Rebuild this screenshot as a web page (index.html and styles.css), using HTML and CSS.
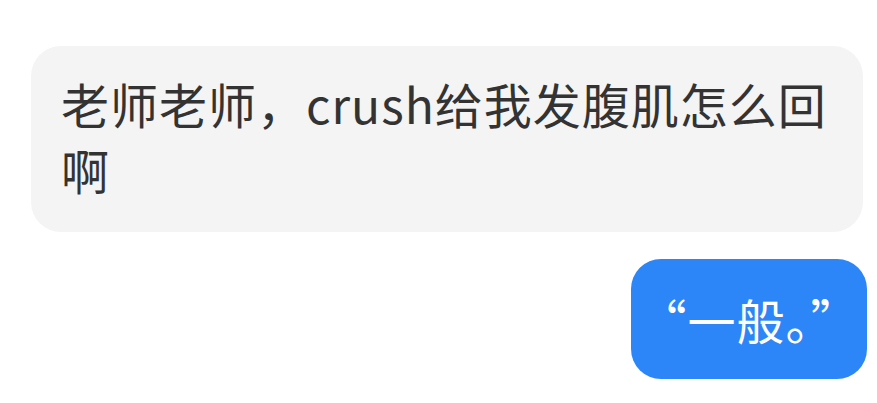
FILE: index.html
```html
<!DOCTYPE html>
<html lang="zh-CN">
<head>
    <meta charset="UTF-8">
    <meta name="viewport" content="width=device-width, initial-scale=1.0">
    <title>聊天</title>
    <link rel="stylesheet" href="styles.css">
</head>
<body>
    <div class="chat">
        <div class="msg msg-left">
            <div class="bubble bubble-gray">老师老师，crush给我发腹肌怎么回啊</div>
        </div>
        <div class="msg msg-right">
            <div class="bubble bubble-blue">“一般。”</div>
        </div>
    </div>
</body>
</html>
```

FILE: styles.css
```css
* { margin:0; padding:0; box-sizing: border-box; }
body {
    background-color: #fff;
    font-family: "Noto Sans CJK SC", "Noto Sans", sans-serif;
}
.chat {
    display: flex;
    flex-direction: column;
    padding: 46px 10px 0 31px;
    gap: 27px;
}
.msg {
    display: flex;
}
.msg-left {
    justify-content: flex-start;
    padding-right: 4px;
}
.msg-right {
    justify-content: flex-end;
}
.bubble {
    border-radius: 30px;
    font-size: 48px;
    line-height: 66px;
    letter-spacing: 1px;
}
.bubble-gray {
    width: 832px;
    background-color: #f4f4f4;
    color: #333;
    padding: 24px 14px 30px 30px;
}
.bubble-blue {
    width: 236px;
    height: 120px;
    background-color: #2d86f7;
    color: #fff;
    display: flex;
    align-items: center;
    justify-content: center;
}
```
